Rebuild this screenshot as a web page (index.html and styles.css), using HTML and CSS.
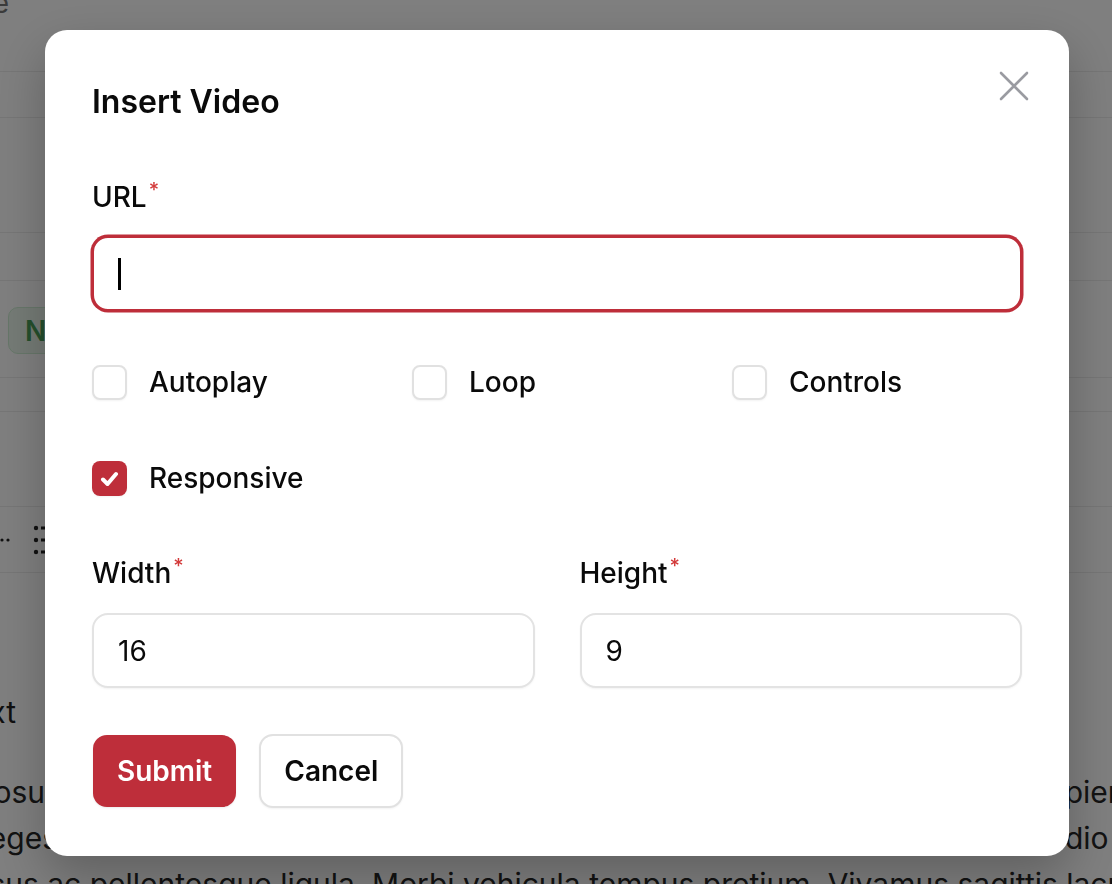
FILE: index.html
```html
<!DOCTYPE html>
<html lang="en">
<head>
<meta charset="utf-8">
<title>Insert Video</title>
<link rel="stylesheet" href="styles.css">
</head>
<body>
<div class="page">
  <div class="row row-0"><div class="clip-left w-9"><span class="page-heading">Edit page</span></div></div>
  <div class="row row-1"></div>
  <div class="row row-2"></div>
  <div class="row row-3"></div>
  <div class="row row-4"><span class="badge">New</span></div>
  <div class="row row-5"></div>
  <div class="row row-6"></div>
  <div class="row row-7">
    <svg class="more" width="10" height="6" viewBox="0 0 10 6"><circle cx="2" cy="3" r="1.6"/><circle cx="8" cy="3" r="1.6"/></svg>
    <svg class="grip" width="16" height="30" viewBox="0 0 16 30"><circle cx="3" cy="3" r="2.2"/><circle cx="3" cy="15" r="2.2"/><circle cx="3" cy="27" r="2.2"/><rect x="8" y="1.5" width="8" height="3"/><rect x="8" y="13.5" width="8" height="3"/><rect x="8" y="25.5" width="8" height="3"/></svg>
  </div>
  <div class="text-heading"><div class="clip-left w-16"><span>Rich text</span></div></div>
  <div class="para">
    <div class="para-line"><div class="clip-left w-45"><span>Lorem ipsum posu</span></div><span class="frag-right r-80">sapien</span></div>
    <div class="para-line"><div class="clip-left w-58"><span>vitae eges</span></div><span class="frag-right r-65">odio</span></div>
    <div class="para-line line-3">lacus ac pellentesque ligula. Morbi vehicula tempus pretium. Vivamus sagittis lacus vel augue</div>
  </div>
</div>

<div class="overlay">
  <div class="modal" role="dialog" aria-labelledby="modal-title">
    <button class="close" type="button" aria-label="Close">
      <svg width="40" height="40" viewBox="0 0 40 40"><path d="M7 7L33 33M33 7L7 33"/></svg>
    </button>
    <h2 class="title" id="modal-title">Insert Video</h2>

    <div class="field url-field">
      <label class="label">URL<span class="req">*</span></label>
      <div class="input is-focused"><span class="caret"></span></div>
    </div>

    <div class="checks">
      <label class="check"><span class="box"></span><span class="check-label">Autoplay</span></label>
      <label class="check"><span class="box"></span><span class="check-label">Loop</span></label>
      <label class="check"><span class="box"></span><span class="check-label">Controls</span></label>
      <label class="check"><span class="box is-checked"><svg width="35" height="35" viewBox="0 0 35 35"><path d="M11 18.5L15.5 23L24 13"/></svg></span><span class="check-label">Responsive</span></label>
    </div>

    <div class="dims">
      <div class="field">
        <label class="label">Width<span class="req">*</span></label>
        <div class="input">16</div>
      </div>
      <div class="field">
        <label class="label">Height<span class="req">*</span></label>
        <div class="input">9</div>
      </div>
    </div>

    <div class="actions">
      <button class="btn btn-primary" type="button">Submit</button>
      <button class="btn btn-secondary" type="button">Cancel</button>
    </div>
  </div>
</div>
</body>
</html>
```

FILE: styles.css
```css
* { box-sizing: border-box; }

html, body {
  margin: 0;
  padding: 0;
  height: 100%;
}

body {
  overflow: hidden;
  background: #ffffff;
  font-family: "Inter", "Noto Sans", sans-serif;
  color: #0a0a0a;
}

/* ---------- background page ---------- */
.page {
  width: 1112px;
  height: 884px;
  overflow: hidden;
  color: #262626;
}

.row {
  border-bottom: 1px solid #ececec;
  display: flex;
  align-items: flex-start;
}
.row-0 { height: 72px; }
.row-1 { height: 46px; }
.row-2 { height: 115px; }
.row-3 { height: 48px; }
.row-4 { height: 97px; }
.row-5 { height: 34px; }
.row-6 { height: 95px; }
.row-7 { height: 66px; align-items: center; }

.clip-left {
  display: flex;
  justify-content: flex-end;
  white-space: nowrap;
  flex: none;
}
.w-9 { width: 9px; }
.w-16 { width: 16px; }
.w-45 { width: 45px; }
.w-58 { width: 58px; }

.page-heading {
  font-size: 28px;
  line-height: 40px;
  margin-top: -17px;
  color: #777;
}

.badge {
  margin: 26px 0 0 8px;
  height: 47px;
  padding: 0 16px;
  display: flex;
  align-items: center;
  border-radius: 10px;
  background: #eaf7ec;
  border: 1px solid #cfeed4;
  color: #4a9f58;
  font-size: 28px;
  font-weight: 600;
}

.more { fill: #222; }
.grip { fill: #222; margin-left: 23px; }

.text-heading {
  margin-top: 119px;
  font-size: 30px;
  line-height: 40px;
  color: #1f1f1f;
}

.para {
  margin-top: 37px;
  font-size: 30px;
  line-height: 46px;
  color: #262626;
}
.para-line {
  display: flex;
  justify-content: space-between;
  white-space: nowrap;
}
.frag-right { flex: none; }
.r-80 { width: 80px; }
.r-65 { width: 65px; }
.line-3 { margin-left: -36px; }

/* ---------- overlay + modal ---------- */
.overlay {
  position: fixed;
  inset: 0;
  background: rgba(0, 0, 0, 0.5);
  display: flex;
  justify-content: center;
  align-items: flex-start;
  padding-top: 30px;
}

.modal {
  position: relative;
  width: 1024px;
  margin-left: 2px;
  background: #ffffff;
  border-radius: 22px;
  padding: 52px 47px 48px 47px;
  box-shadow: 0 20px 50px rgba(0, 0, 0, 0.25);
}

.close {
  position: absolute;
  top: 36px;
  right: 35px;
  width: 40px;
  height: 40px;
  padding: 0;
  border: 0;
  background: none;
}
.close svg {
  display: block;
  stroke: #9a9ba1;
  stroke-width: 2.6;
  stroke-linecap: round;
  fill: none;
}

.title {
  margin: 0;
  font-size: 32px;
  line-height: 40px;
  font-weight: 600;
  color: #0a0a0a;
}

.field {
  display: flex;
  flex-direction: column;
}
.url-field { margin-top: 55px; }

.label {
  font-size: 28px;
  line-height: 40px;
  font-weight: 500;
  color: #0a0a0a;
}
.req {
  display: inline-block;
  vertical-align: top;
  margin: 3px 0 0 2px;
  font-size: 20px;
  line-height: 20px;
  color: #d33a3a;
  font-weight: 500;
}

.input {
  margin-top: 19px;
  height: 75px;
  border: 2px solid #e3e3e3;
  border-radius: 16px;
  padding: 0 24px;
  display: flex;
  align-items: center;
  font-size: 28px;
  color: #0a0a0a;
  box-shadow: 0 1px 2px rgba(0, 0, 0, 0.05);
  background: #fff;
}
.input.is-focused {
  border-color: #be2e3a;
  box-shadow: 0 0 0 1.5px #be2e3a;
}
.caret {
  display: block;
  width: 3px;
  height: 32px;
  background: #000;
}

.checks {
  margin-top: 51px;
  display: grid;
  grid-template-columns: repeat(3, 1fr);
  column-gap: 30px;
  row-gap: 56px;
}
.check {
  display: flex;
  align-items: center;
  gap: 22px;
  height: 40px;
  font-size: 28px;
  font-weight: 500;
  color: #0a0a0a;
}
.box {
  flex: none;
  width: 35px;
  height: 35px;
  border: 2px solid #e1e1e1;
  border-radius: 8px;
  background: #fff;
  box-shadow: 0 1px 2px rgba(0, 0, 0, 0.05);
}
.box.is-checked {
  border: 0;
  background: #be2e3a;
}
.box.is-checked svg {
  display: block;
  stroke: #fff;
  stroke-width: 4;
  stroke-linecap: round;
  stroke-linejoin: round;
  fill: none;
}

.dims {
  margin-top: 55px;
  display: grid;
  grid-template-columns: 1fr 1fr;
  column-gap: 45px;
}
.dims .input { margin-top: 20px; }

.actions {
  margin-top: 46px;
  display: flex;
  gap: 23px;
  align-items: center;
}
.btn {
  height: 72px;
  padding: 0 24px;
  border-radius: 14px;
  font-family: inherit;
  font-size: 28px;
  font-weight: 600;
  cursor: pointer;
}
.btn-primary {
  margin-left: 1px;
  background: #be2e3a;
  color: #fff;
  border: 0;
  box-shadow: 0 1px 2px rgba(0, 0, 0, 0.08);
}
.btn-secondary {
  height: 74px;
  padding: 0 23px;
  background: #fff;
  color: #0a0a0a;
  border: 2px solid #e1e1e1;
  box-shadow: 0 1px 2px rgba(0, 0, 0, 0.05);
}
```
